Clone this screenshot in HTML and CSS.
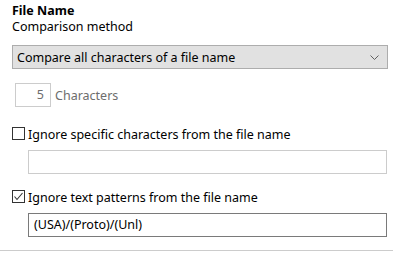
FILE: index.html
```html
<!DOCTYPE html>
<html lang="en">
<head>
  <meta charset="UTF-8">
  <meta name="viewport" content="width=device-width, initial-scale=1.0">
  <title>File Name</title>
  <link rel="stylesheet" href="styles.css">
</head>
<body>
  <div class="panel">
    <div class="title">File Name</div>
    <div class="label">Comparison method</div>

    <!-- comparison method dropdown -->
    <div class="select">
      <span>Compare all characters of a file name</span>
      <svg class="chevron" width="9" height="5" viewBox="0 0 9 5">
        <path d="M0.5 0.5 L4.5 4.5 L8.5 0.5" fill="none" stroke="#606060" stroke-width="1"/>
      </svg>
    </div>

    <div class="countRow">
      <span class="count">5</span>
      <span class="countLabel">Characters</span>
    </div>

    <div class="checkRow">
      <span class="box"></span>
      <span>Ignore specific characters from the file name</span>
    </div>
    <div class="field"></div>

    <div class="checkRow second">
      <span class="box">
        <svg width="11" height="11" viewBox="0 0 11 11">
          <path d="M1.5 5.5 L4 8.5 L9.5 2" fill="none" stroke="#333" stroke-width="1.1"/>
        </svg>
      </span>
      <span>Ignore text patterns from the file name</span>
    </div>
    <div class="field active">(USA)/(Proto)/(Unl)</div>
  </div>
  <div class="divider"></div>
</body>
</html>
```

FILE: styles.css
```css
body {
  margin: 0;
  background-color: #fff;
  font-family: "Segoe UI", "Noto Sans", "Open Sans", sans-serif;
  font-size: 12.5px;
  color: #000;
}

.panel {
  padding: 3px 6px 0 12px;
  display: flex;
  flex-direction: column;
}

.title {
  font-weight: bold;
  line-height: 16px;
}
.label {
  line-height: 16px;
}

.select {
  margin-top: 10px;
  height: 22px;
  border: 1px solid #adadad;
  background-color: #e1e1e1;
  display: flex;
  align-items: center;
  justify-content: space-between;
  padding: 0 8px 0 4px;
  width: 362px;
}

.countRow {
  margin-top: 14px;
  margin-left: 3px;
  display: flex;
  align-items: center;
  gap: 4px;
  color: #6d6d6d;
}
.count {
  width: 28px;
  height: 22px;
  border: 1px solid #cccccc;
  text-align: right;
  padding-right: 6px;
  line-height: 22px;
}

.checkRow {
  margin-top: 20px;
  display: flex;
  align-items: center;
  gap: 3px;
  height: 13px;
  line-height: 13px;
}
.checkRow span:last-child {
  padding-top: 1px;
}
.checkRow.second {
  margin-top: 16px;
}
.box {
  width: 11px;
  height: 11px;
  border: 1px solid #333;
  display: flex;
  align-items: center;
  justify-content: center;
}

.field {
  margin: 10px 0 0 16px;
  height: 22px;
  width: 352px;
  border: 1px solid #cccccc;
  line-height: 22px;
  padding-left: 5px;
}
.field.active {
  border-color: #7a7a7a;
}

.divider {
  margin-top: 13px;
  height: 1px;
  background-color: #cccccc;
}
```
